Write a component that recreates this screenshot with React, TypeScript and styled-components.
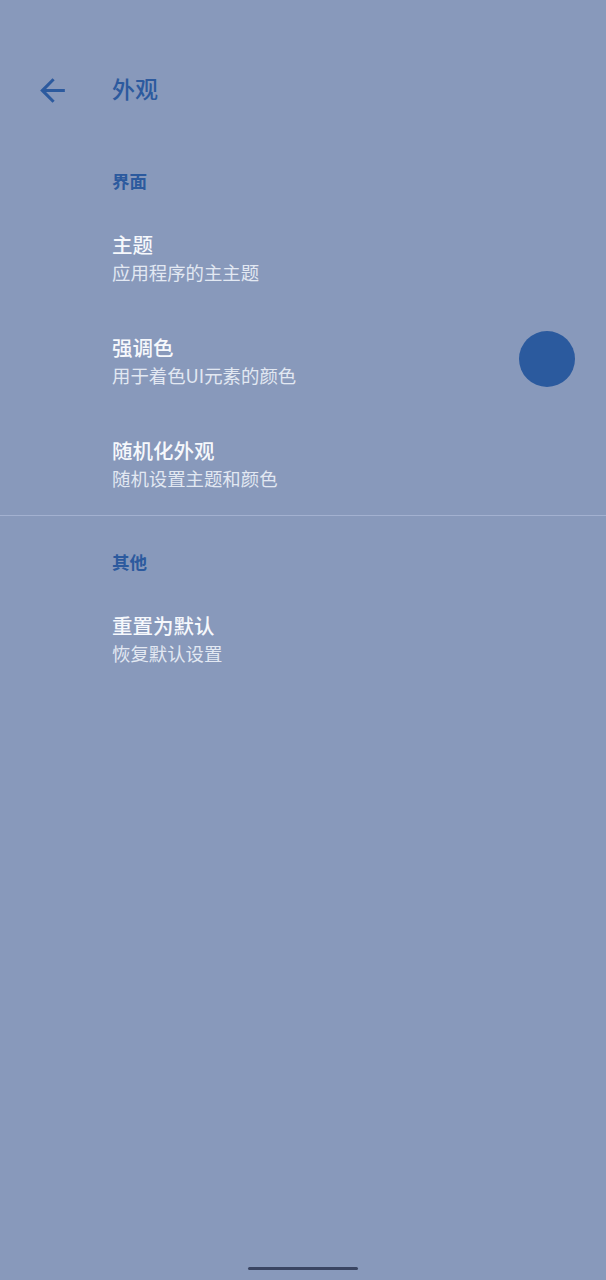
import React from "react";
import styled, { createGlobalStyle } from "styled-components";

const GlobalStyle = createGlobalStyle`
  html, body {
    margin: 0;
    padding: 0;
    background: #8899bb;
  }
  * {
    box-sizing: border-box;
  }
`;

const Page = styled.div`
  display: flex;
  flex-direction: column;
  min-height: 1280px;
  width: 606px;
  background: #8899bb;
  font-family: "Noto Sans CJK SC", "Noto Sans", sans-serif;
`;

const StatusBar = styled.div`
  height: 46px;
`;

const Toolbar = styled.header`
  display: flex;
  align-items: center;
  height: 84px;
`;

const BackButton = styled.button`
  display: flex;
  align-items: center;
  justify-content: center;
  width: 48px;
  height: 48px;
  margin-left: 28px;
  margin-top: 4px;
  padding: 0;
  border: none;
  background: none;
  color: #2c5a9e;
  cursor: pointer;
`;

const Title = styled.h1`
  margin: 0 0 0 36px;
  font-size: 23px;
  font-weight: 500;
  color: #2c5a9e;
`;

const Section = styled.section<{ $top: number }>`
  display: flex;
  flex-direction: column;
  padding-top: ${(p) => p.$top}px;
`;

const SectionHeader = styled.h2`
  margin: 0 0 13px 112px;
  font-size: 17.5px;
  line-height: 24px;
  font-weight: 700;
  color: #2c5a9e;
`;

const Item = styled.div`
  display: flex;
  align-items: center;
  justify-content: space-between;
  padding: 24px 31px 23px 112px;
  cursor: pointer;
`;

const ItemText = styled.div`
  display: flex;
  flex-direction: column;
`;

const ItemTitle = styled.span`
  font-size: 20.5px;
  line-height: 28px;
  font-weight: 500;
  color: #f6f8fc;
`;

const ItemSummary = styled.span`
  font-size: 18.4px;
  line-height: 28px;
  color: #e2e8f2;
`;

const Swatch = styled.span<{ $color: string }>`
  width: 56px;
  height: 56px;
  margin-top: -4px;
  border-radius: 50%;
  background: ${(p) => p.$color};
`;

const Divider = styled.hr`
  margin: 0;
  border: none;
  height: 1px;
  background: #a3b1d0;
`;

const GestureArea = styled.div`
  display: flex;
  justify-content: center;
  margin-top: auto;
  padding-bottom: 10px;
`;

const GestureBar = styled.span`
  width: 110px;
  height: 3px;
  border-radius: 2px;
  background: #3a4562;
`;

type Pref = {
  title: string;
  summary: string;
  color?: string;
};

const interfacePrefs: Pref[] = [
  { title: "主题", summary: "应用程序的主主题" },
  { title: "强调色", summary: "用于着色UI元素的颜色", color: "#2b5a9e" },
  { title: "随机化外观", summary: "随机设置主题和颜色" },
];

const otherPrefs: Pref[] = [{ title: "重置为默认", summary: "恢复默认设置" }];

const PrefRow = ({ title, summary, color }: Pref) => (
  <Item>
    <ItemText>
      <ItemTitle>{title}</ItemTitle>
      <ItemSummary>{summary}</ItemSummary>
    </ItemText>
    {color && <Swatch $color={color} />}
  </Item>
);

const ArrowBack = () => (
  <svg width="37" height="37" viewBox="0 0 24 24" fill="currentColor">
    <path d="M20 11H7.83l5.59-5.59L12 4l-8 8 8 8 1.41-1.41L7.83 13H20v-2z" />
  </svg>
);

export default function App() {
  return (
    <>
      <GlobalStyle />
      <Page>
        <StatusBar />
        <Toolbar>
          <BackButton aria-label="返回">
            <ArrowBack />
          </BackButton>
          <Title>外观</Title>
        </Toolbar>
        <Section $top={39}>
          <SectionHeader>界面</SectionHeader>
          {interfacePrefs.map((p) => (
            <PrefRow key={p.title} {...p} />
          ))}
        </Section>
        <Divider />
        <Section $top={34}>
          <SectionHeader>其他</SectionHeader>
          {otherPrefs.map((p) => (
            <PrefRow key={p.title} {...p} />
          ))}
        </Section>
        <GestureArea>
          <GestureBar />
        </GestureArea>
      </Page>
    </>
  );
}
